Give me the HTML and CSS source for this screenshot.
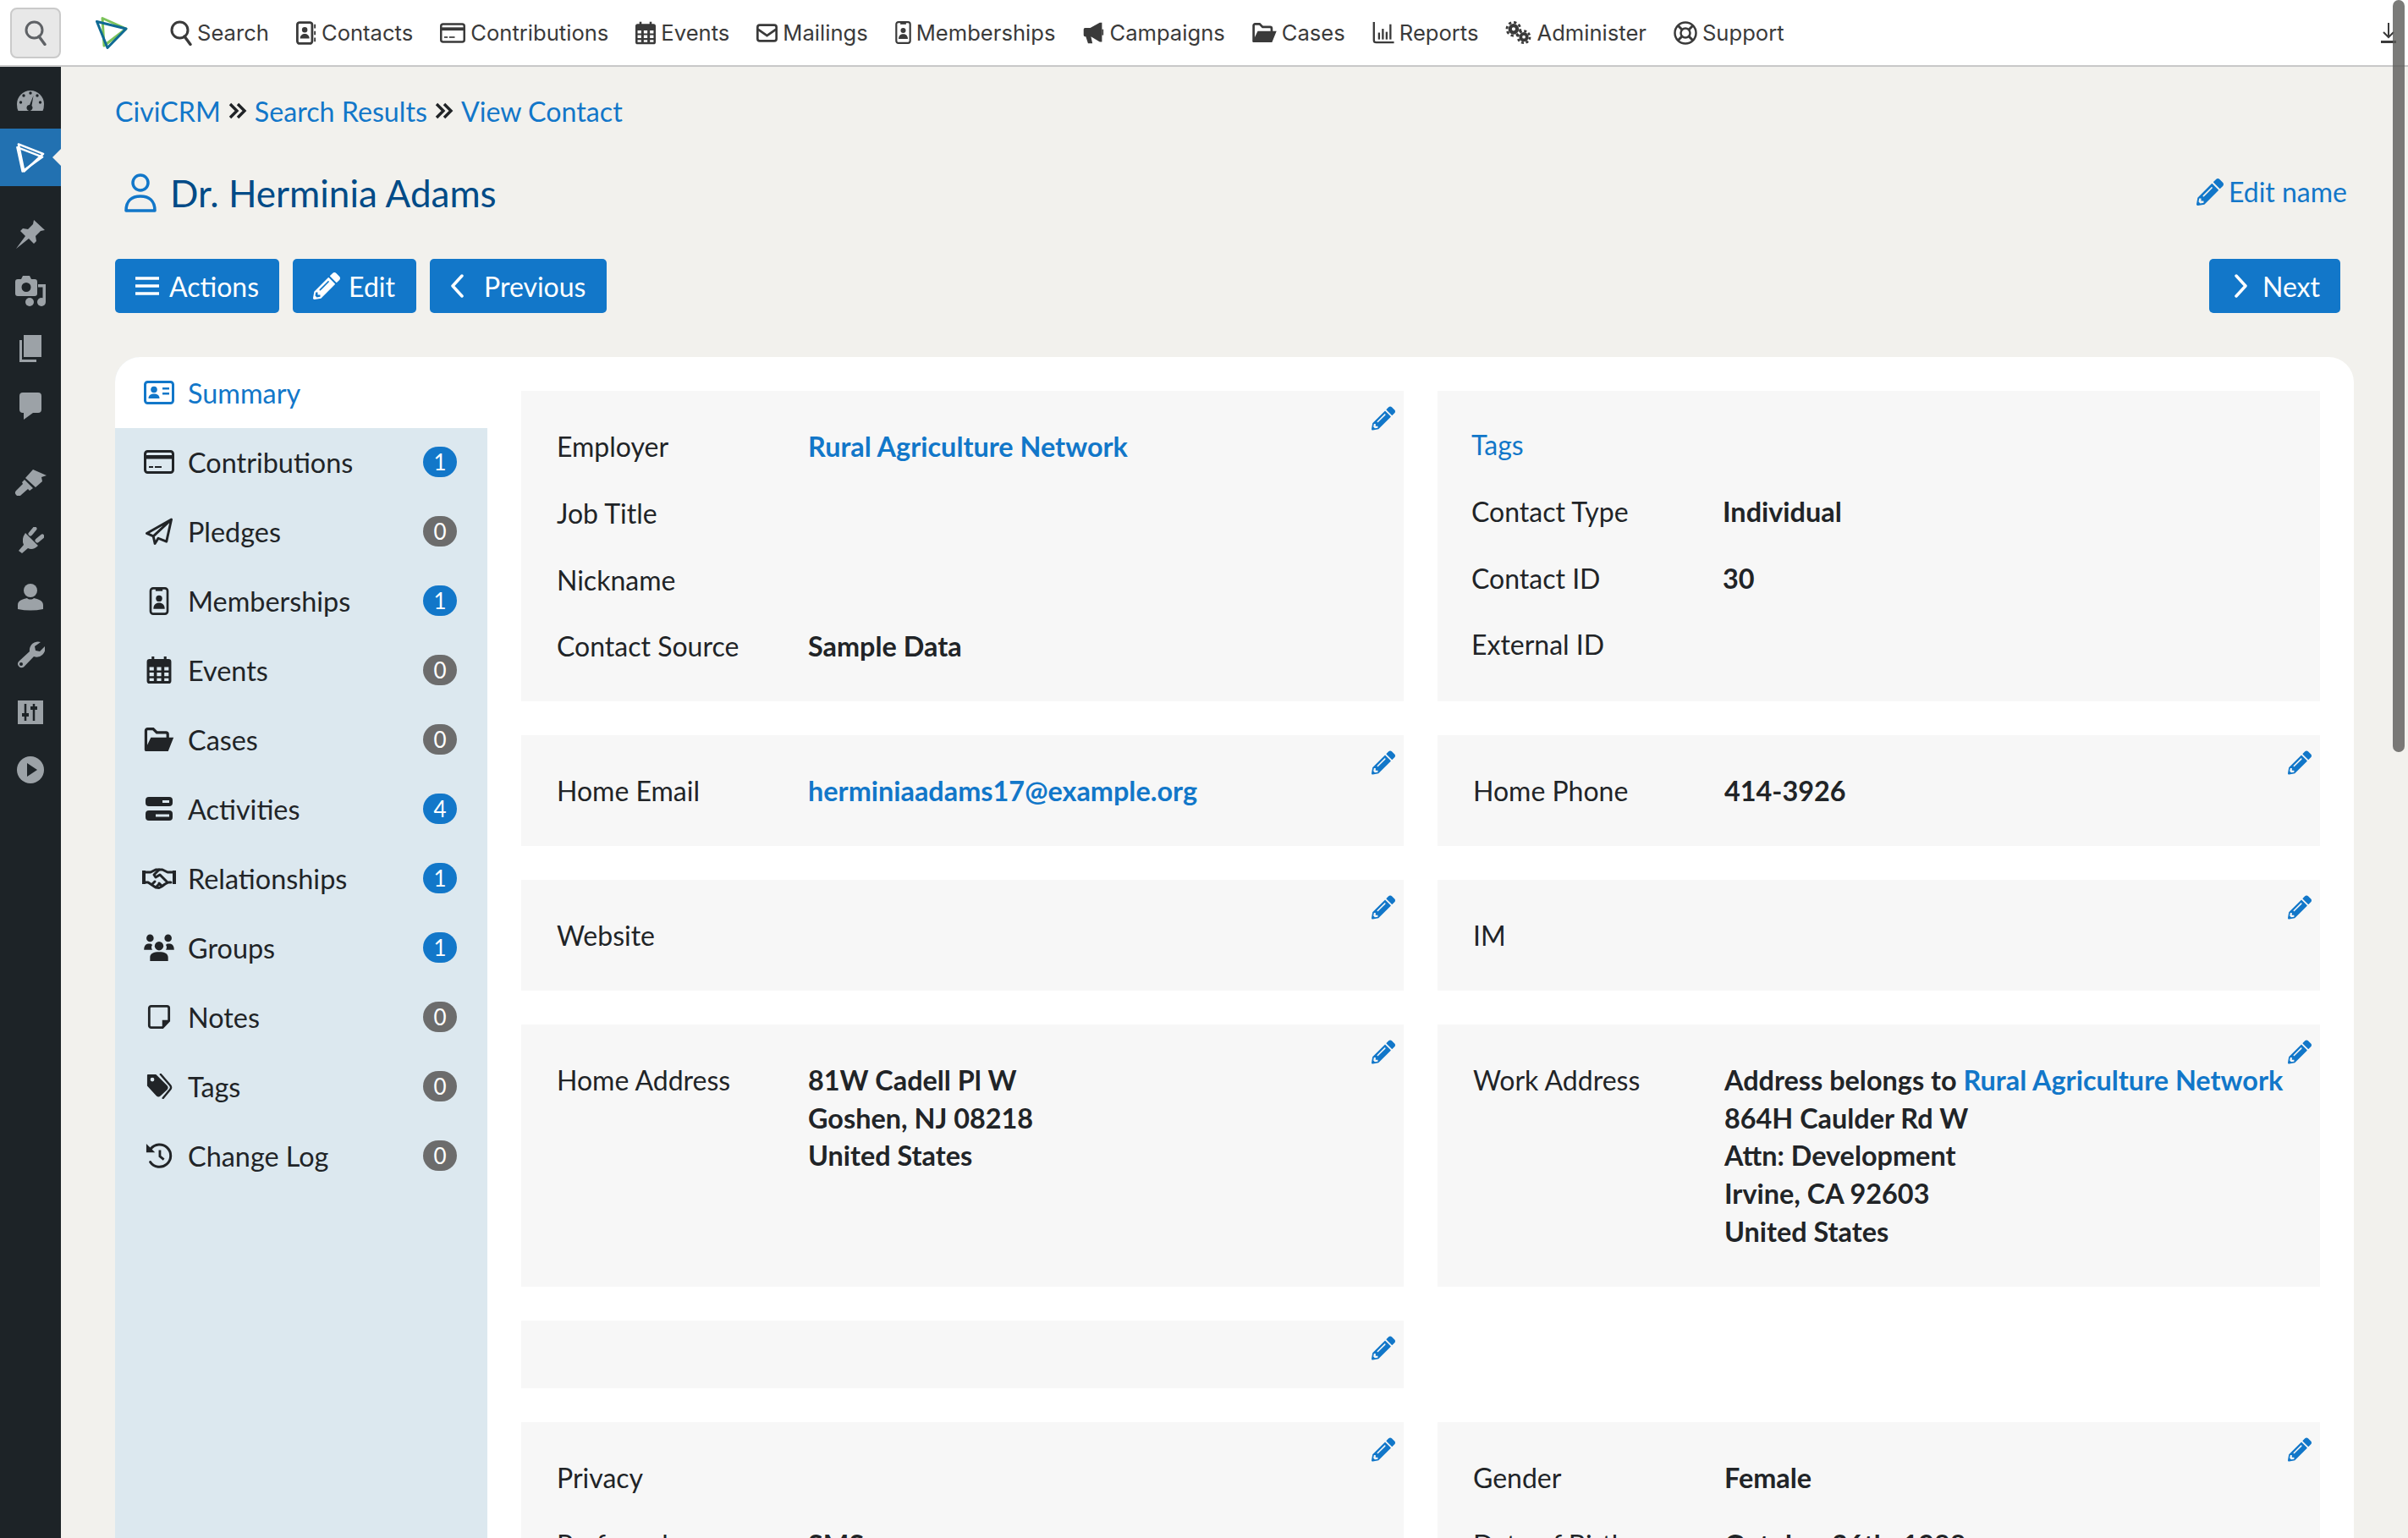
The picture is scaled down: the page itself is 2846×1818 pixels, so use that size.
FILE: index.html
```html
<!DOCTYPE html>
<html lang="en">
<head>
    <meta charset="UTF-8">
    <meta name="viewport" content="width=device-width, initial-scale=1.0">
    <title>Dr. Herminia Adams | CiviCRM</title>
    <link rel="stylesheet" href="styles.css">
</head>
<body>
    <svg class="icon-defs" aria-hidden="true">
        <symbol id="i-pencil" viewBox="0 0 512 512"><path d="M497.9 142.1l-46.1 46.1c-4.7 4.7-12.3 4.7-17 0l-111-111c-4.7-4.7-4.7-12.3 0-17l46.1-46.1c18.7-18.7 49.1-18.7 67.9 0l60.1 60.1c18.8 18.7 18.8 49.1 0 67.9zM284.2 99.8L21.6 362.4.4 483.9c-2.9 16.4 11.4 30.6 27.8 27.8l121.5-21.3 262.6-262.6c4.7-4.7 4.7-12.3 0-17l-111-111c-4.8-4.7-12.4-4.7-17.1 0zM124.1 339.9c-5.5-5.5-5.5-14.3 0-19.8l154-154c5.5-5.5 14.3-5.5 19.8 0s5.5 14.3 0 19.8l-154 154c-5.5 5.5-14.3 5.5-19.8 0zM88 424h48v36.3l-64.5 11.3-31.1-31.1L51.7 376H88v48z"/></symbol>
        <symbol id="i-search" viewBox="0 0 26 30"><circle cx="11.5" cy="11.5" r="9.5" fill="none" stroke="currentColor" stroke-width="3"/><path d="M17 19l7 9.500" fill="none" stroke="currentColor" stroke-width="3.400" stroke-linecap="round"/></symbol>
        <symbol id="i-contacts" viewBox="0 0 26 30"><rect x="1.500" y="1.500" width="19" height="27" rx="3" fill="none" stroke="currentColor" stroke-width="3"/><circle cx="11" cy="11" r="3.500"/><path d="M5 22c0-4 3-6 6-6s6 2 6 6z"/><path d="M24 4v5M24 12.500v5M24 21v5" stroke="currentColor" stroke-width="2"/></symbol>
        <symbol id="i-card" viewBox="0 0 36 28"><rect x="1.500" y="1.500" width="33" height="25" rx="3" fill="none" stroke="currentColor" stroke-width="3"/><rect x="2" y="6" width="32" height="4.500"/><rect x="6" y="19" width="5" height="2"/><rect x="13" y="19" width="8" height="2"/></symbol>
        <symbol id="i-calendar" viewBox="0 0 28 31"><path fill-rule="evenodd" d="M3 3h22a3 3 0 0 1 3 3v22a3 3 0 0 1-3 3H3a3 3 0 0 1-3-3V6a3 3 0 0 1 3-3zM3 12v4h5v-4zM11.500 12v4h5v-4zM20 12v4h5v-4zM3 18.500v4h5v-4zM11.500 18.500v4h5v-4zM20 18.500v4h5v-4zM3 25v3h5v-3zM11.500 25v3h5v-3zM20 25v3h5v-3z"/><rect x="5.500" width="3" height="6"/><rect x="19.500" width="3" height="6"/></symbol>
        <symbol id="i-mail" viewBox="0 0 28 24"><rect x="1.500" y="1.500" width="25" height="21" rx="3" fill="none" stroke="currentColor" stroke-width="3"/><path d="M2 7l12 8.500L26 7" fill="none" stroke="currentColor" stroke-width="3"/></symbol>
        <symbol id="i-member" viewBox="0 0 22 32"><rect x="1.300" y="1.300" width="19.400" height="29.400" rx="3" fill="none" stroke="currentColor" stroke-width="2.600"/><rect x="7" y="1" width="8" height="3.500"/><circle cx="11" cy="13" r="3.600"/><path d="M4.500 25c0-5 3-7 6.500-7s6.500 2 6.500 7z"/></symbol>
        <symbol id="i-bullhorn" viewBox="0 0 28 30"><path d="M1 10a2 2 0 0 1 2-2h7L23 1h3v26h-3L11 20l2 9H7L4 20H3a2 2 0 0 1-2-2z"/><rect x="26" y="10" width="2" height="8"/></symbol>
        <symbol id="i-folder" viewBox="0 0 32 27"><path d="M1.500 25V3.500a2 2 0 0 1 2-2h6l4 4h10a2 2 0 0 1 2 2V12" fill="none" stroke="currentColor" stroke-width="3"/><path d="M7 11h25l-6 15H1a1 1 0 0 1-.5-1.500z"/></symbol>
        <symbol id="i-chart" viewBox="0 0 28 29"><path d="M1.500 0v24a3 3 0 0 0 3 3H28" fill="none" stroke="currentColor" stroke-width="2.600"/><rect x="7" y="14" width="2.600" height="9"/><rect x="12" y="9" width="2.600" height="14"/><rect x="17" y="13" width="2.600" height="10"/><rect x="22" y="3" width="2.600" height="20"/></symbol>
        <symbol id="i-cogs" viewBox="0 0 32 30"><g fill="none" stroke="currentColor"><circle cx="10" cy="10" r="4.500" stroke-width="4.500"/><circle cx="10" cy="10" r="8.500" stroke-width="3" stroke-dasharray="3.500 3.170"/><circle cx="23" cy="20" r="4" stroke-width="4"/><circle cx="23" cy="20" r="7.500" stroke-width="3" stroke-dasharray="3.200 2.690"/></g></symbol>
        <symbol id="i-lifering" viewBox="0 0 28 28"><g fill="none" stroke="currentColor" stroke-width="2.500"><circle cx="14" cy="14" r="12.500"/><circle cx="14" cy="14" r="5.500"/><path d="M5.200 5.200l5 5M22.800 5.200l-5 5M5.200 22.800l5-5M22.800 22.800l-5-5" stroke-width="3"/></g></symbol>
        <symbol id="i-idcard" viewBox="0 0 36 28"><rect x="1.500" y="1.500" width="33" height="25" rx="3" fill="none" stroke="currentColor" stroke-width="3"/><circle cx="12" cy="10.500" r="3.800"/><path d="M5.500 21c0-4 3-5.500 6.500-5.500s6.500 1.500 6.500 5.500z"/><rect x="22" y="8" width="8" height="2.500"/><rect x="22" y="14" width="8" height="2.500"/></symbol>
        <symbol id="i-plane" viewBox="0 0 34 34"><path d="M32 2L2 19l8 3.500L32 2l-6 27-10-4-4 6.500-2-9" fill="none" stroke="currentColor" stroke-width="3" stroke-linejoin="round"/></symbol>
        <symbol id="i-server" viewBox="0 0 32 28"><path fill-rule="evenodd" d="M4 0h24a4 4 0 0 1 4 4v3a4 4 0 0 1-4 4H4a4 4 0 0 1-4-4V4a4 4 0 0 1 4-4zM20 4v3h8V4zM4 16h24a4 4 0 0 1 4 4v4a4 4 0 0 1-4 4H4a4 4 0 0 1-4-4v-4a4 4 0 0 1 4-4zM12 20.500v3h16v-3z"/></symbol>
        <symbol id="i-handshake" viewBox="0 0 40 26"><rect y="4" width="4" height="16"/><rect x="36" y="4" width="4" height="16"/><g fill="none" stroke="currentColor" stroke-width="3" stroke-linejoin="round" stroke-linecap="round"><path d="M4 6h6l6-3h8l6 3h6M4 18h3l9 6 4 .5 3-1.500 4-3 4-2h3"/><path d="M20 3l-6 6 2 3 5-3 8 8"/><path d="M12 20l3-3M17 23l3-3M23 22l-3-3"/></g></symbol>
        <symbol id="i-users" viewBox="0 0 40 36"><circle cx="8" cy="5.500" r="4.800"/><circle cx="32" cy="5.500" r="4.800"/><circle cx="20" cy="16" r="5.800"/><path d="M0 21c0-6 3-8 7-8 2 0 3 .5 4 1.500-1.500 2-1.500 4 0 6.500zM40 21c0-6-3-8-7-8-2 0-3 .5-4 1.500 1.500 2 1.500 4 0 6.500zM8 36v-5c0-5 5-7 12-7s12 2 12 7v5z"/></symbol>
        <symbol id="i-note" viewBox="0 0 28 30"><path d="M4 1.500h20a2.500 2.500 0 0 1 2.500 2.500v16l-8 8.500H4A2.500 2.500 0 0 1 1.500 26V4A2.500 2.500 0 0 1 4 1.500z" fill="none" stroke="currentColor" stroke-width="3"/><path d="M27 19h-9v10z"/></symbol>
        <symbol id="i-tags" viewBox="0 0 32 32"><path fill-rule="evenodd" d="M2 1h10l14 14a4 4 0 0 1 0 5.500L18 28a4 4 0 0 1-5.500 0L1 15.500V2a1 1 0 0 1 1-1zM7.500 5a2.500 2.500 0 1 0 0 5 2.500 2.500 0 0 0 0-5z"/><path d="M18 1l12 14a4 4 0 0 1 0 5L21 31" fill="none" stroke="currentColor" stroke-width="2.600" stroke-linecap="round"/></symbol>
        <symbol id="i-history" viewBox="0 0 32 34"><path d="M5.500 8.500A14 14 0 1 1 5 25" fill="none" stroke="currentColor" stroke-width="3.200" stroke-linecap="round"/><path d="M0 2l11 11H0z"/><path d="M17 10v8l5 4" fill="none" stroke="currentColor" stroke-width="3"/></symbol>
        <symbol id="i-angles" viewBox="0 0 22 20"><path d="M2 2l8 8-8 8M11 2l8 8-8 8" fill="none" stroke="currentColor" stroke-width="3.400"/></symbol>
        <symbol id="i-logo" viewBox="0 0 38 38"><path d="M8 1.500L36 14 10 34z" fill="none" stroke="#7cc35a" stroke-width="3" stroke-linejoin="round"/><path d="M1.500 5.500L36 14 14 36.500z" fill="none" stroke="#0f6a94" stroke-width="3" stroke-linejoin="round"/></symbol>
        <symbol id="i-logo-white" viewBox="0 0 36 38"><path d="M3 2l31 12-24 22z" fill="none" stroke="#fff" stroke-width="2.600" stroke-linejoin="round"/><path d="M1.500 6L33 18 8 36z" fill="none" stroke="#fff" stroke-width="2.600" stroke-linejoin="round"/></symbol>
        <symbol id="i-gauge" viewBox="0 0 32 26"><path d="M0 18a16 16 0 0 1 32 0q0 5-1.500 8h-29Q0 23 0 18z"/><g fill="#1d2327"><circle cx="16" cy="5" r="1.700"/><circle cx="8" cy="8" r="1.700"/><circle cx="24" cy="8" r="1.700"/><circle cx="4.500" cy="16" r="1.700"/><circle cx="27.500" cy="16" r="1.700"/></g><path d="M19.500 8l-2 12a3.500 3.500 0 1 1-6 2 3.500 3.500 0 0 1 3.500-3z" fill="#1d2327"/></symbol>
        <symbol id="i-pin" viewBox="0 0 34 35"><path d="M0 35l11-15-6-6 3-3 6 1 6-6 1-5 13 12-5 1-6 6 1 6-3 3-6-6z"/></symbol>
        <symbol id="i-media" viewBox="0 0 37 36"><path fill-rule="evenodd" d="M3 4h4l2-4h8l2 4h4a3 3 0 0 1 3 3v14a3 3 0 0 1-3 3H3a3 3 0 0 1-3-3V7a3 3 0 0 1 3-3zM13 8a5.500 5.500 0 1 0 0 11 5.500 5.500 0 0 0 0-11z"/><circle cx="17" cy="31" r="5"/><circle cx="31" cy="31" r="5"/><rect x="32.500" y="10" width="3.500" height="21"/><rect x="27" y="10" width="9" height="3.500"/></symbol>
        <symbol id="i-pages" viewBox="0 0 26 32"><path d="M0 6h3v23h17v3H0z"/><rect x="5" width="21" height="26"/></symbol>
        <symbol id="i-comment" viewBox="0 0 26 32"><path d="M4 0h18a4 4 0 0 1 4 4v16a4 4 0 0 1-4 4h-6L5 32v-8H4a4 4 0 0 1-4-4V4a4 4 0 0 1 4-4z"/></symbol>
        <symbol id="i-brush" viewBox="0 0 38 31"><path d="M22 0l16 7-6 2 1 5-8 7-12-11zM12 12l10 10-4 3-2-2-8 7a3 3 0 0 1-6-5l8-8-1-2z"/></symbol>
        <symbol id="i-plug" viewBox="0 0 31 31"><path d="M9 7l15 15q-6 6-12 3l-7 6-4-3 6-7Q4 14 9 7z"/><path d="M15 8l5-6M23 16l6-5" stroke="currentColor" stroke-width="5" stroke-linecap="round"/></symbol>
        <symbol id="i-person" viewBox="0 0 30 32"><circle cx="15" cy="8" r="8"/><path d="M0 30v-5c0-5 6-7 11-8 2 2 6 2 8 0 5 1 11 3 11 8v5q-15 3-30 0z"/></symbol>
        <symbol id="i-wrench" viewBox="0 0 33 32"><path fill-rule="evenodd" d="M28 1a10 10 0 0 0-13 11L2 24a4.500 4.500 0 0 0 6 6.500L20 18a10 10 0 0 0 13-12l-6 6-5-1-1-5zM5 25a2 2 0 1 0 0 4 2 2 0 0 0 0-4z"/></symbol>
        <symbol id="i-sliders" viewBox="0 0 30 28"><rect width="30" height="28"/><path d="M9 4v20M19 4v20" stroke="#1d2327" stroke-width="2.500"/><path d="M5 17h8M15 9h8" stroke="#1d2327" stroke-width="4"/></symbol>
        <symbol id="i-play" viewBox="0 0 32 32"><circle cx="16" cy="16" r="16"/><path d="M12 8l12 8-12 8z" fill="#1d2327"/></symbol>
    </svg>

    <header class="topbar">
        <button class="menu-search" type="button"><svg width="26" height="30"><use href="#i-search"/></svg></button>
        <svg class="top-logo" width="38" height="38"><use href="#i-logo"/></svg>
        <nav class="top-nav">
            <a href="#"><svg width="26" height="30"><use href="#i-search"/></svg>Search</a>
            <a href="#"><svg width="24" height="28"><use href="#i-contacts"/></svg>Contacts</a>
            <a href="#"><svg width="30" height="24"><use href="#i-card"/></svg>Contributions</a>
            <a href="#"><svg width="24" height="28"><use href="#i-calendar"/></svg>Events</a>
            <a href="#"><svg width="25" height="22"><use href="#i-mail"/></svg>Mailings</a>
            <a href="#"><svg width="19" height="27"><use href="#i-member"/></svg>Memberships</a>
            <a href="#"><svg width="26" height="26"><use href="#i-bullhorn"/></svg>Campaigns</a>
            <a href="#"><svg width="29" height="24"><use href="#i-folder"/></svg>Cases</a>
            <a href="#"><svg width="26" height="26"><use href="#i-chart"/></svg>Reports</a>
            <a href="#"><svg width="31" height="28"><use href="#i-cogs"/></svg>Administer</a>
            <a href="#"><svg width="28" height="28"><use href="#i-lifering"/></svg>Support</a>
        </nav>
        <svg class="top-collapse" width="18" height="24" viewBox="0 0 18 24"><path d="M9 0v17M3 11l6 6 6-6" fill="none" stroke="#3a3a3a" stroke-width="2"/><rect y="21" width="18" height="3" fill="#3a3a3a"/></svg>
    </header>

    <div class="layout">
        <aside class="admin-menu">
            <div class="menu-group">
                <a class="menu-item" href="#"><svg width="32" height="26"><use href="#i-gauge"/></svg></a>
                <a class="menu-item active" href="#"><svg width="34" height="37"><use href="#i-logo-white"/></svg></a>
            </div>
            <div class="menu-group">
                <a class="menu-item" href="#"><svg width="34" height="35"><use href="#i-pin"/></svg></a>
                <a class="menu-item" href="#"><svg width="37" height="36"><use href="#i-media"/></svg></a>
                <a class="menu-item" href="#"><svg width="26" height="32"><use href="#i-pages"/></svg></a>
                <a class="menu-item" href="#"><svg width="26" height="32"><use href="#i-comment"/></svg></a>
            </div>
            <div class="menu-group">
                <a class="menu-item" href="#"><svg width="38" height="31"><use href="#i-brush"/></svg></a>
                <a class="menu-item" href="#"><svg width="31" height="31"><use href="#i-plug"/></svg></a>
                <a class="menu-item" href="#"><svg width="30" height="32"><use href="#i-person"/></svg></a>
                <a class="menu-item" href="#"><svg width="33" height="32"><use href="#i-wrench"/></svg></a>
                <a class="menu-item" href="#"><svg width="30" height="28"><use href="#i-sliders"/></svg></a>
                <a class="menu-item" href="#"><svg width="32" height="32"><use href="#i-play"/></svg></a>
            </div>
        </aside>

        <main class="content">
            <div class="breadcrumb">
                <a href="#">CiviCRM</a>
                <svg class="crumb-sep" width="22" height="20"><use href="#i-angles"/></svg>
                <a href="#">Search Results</a>
                <svg class="crumb-sep" width="22" height="20"><use href="#i-angles"/></svg>
                <a href="#">View Contact</a>
            </div>

            <div class="title-row">
                <h1>
                    <svg class="title-icon" width="40" height="46" viewBox="0 0 40 46"><circle cx="20" cy="11" r="9" fill="none" stroke="currentColor" stroke-width="3.500"/><path d="M3 44c0-12 7-17 17-17s17 5 17 17z" fill="none" stroke="currentColor" stroke-width="3.500" stroke-linejoin="round"/></svg>
                    Dr. Herminia Adams
                </h1>
                <a class="edit-name" href="#"><svg width="32" height="32"><use href="#i-pencil"/></svg>Edit name</a>
            </div>

            <div class="actions-row">
                <a class="btn" href="#"><svg width="28" height="24" viewBox="0 0 28 24"><path d="M0 3h28M0 12h28M0 21h28" stroke="currentColor" stroke-width="3.500"/></svg>Actions</a>
                <a class="btn btn-edit" href="#"><svg width="32" height="32"><use href="#i-pencil"/></svg>Edit</a>
                <a class="btn btn-prev" href="#"><svg width="16" height="28" viewBox="0 0 16 28"><path d="M14 2L3 14l11 12" fill="none" stroke="currentColor" stroke-width="3.500" stroke-linecap="round" stroke-linejoin="round"/></svg>Previous</a>
                <a class="btn btn-next" href="#"><svg width="16" height="28" viewBox="0 0 16 28"><path d="M2 2l11 12L2 26" fill="none" stroke="currentColor" stroke-width="3.500" stroke-linecap="round" stroke-linejoin="round"/></svg>Next</a>
            </div>

            <section class="contact-card">
                <ul class="tabs">
                    <li class="tab selected"><svg width="36" height="28"><use href="#i-idcard"/></svg><span class="tab-name">Summary</span></li>
                    <li class="tab"><svg width="36" height="28"><use href="#i-card"/></svg><span class="tab-name">Contributions</span><span class="badge">1</span></li>
                    <li class="tab"><svg width="34" height="33"><use href="#i-plane"/></svg><span class="tab-name">Pledges</span><span class="badge zero">0</span></li>
                    <li class="tab"><svg width="24" height="33"><use href="#i-member"/></svg><span class="tab-name">Memberships</span><span class="badge">1</span></li>
                    <li class="tab"><svg width="28" height="32"><use href="#i-calendar"/></svg><span class="tab-name">Events</span><span class="badge zero">0</span></li>
                    <li class="tab"><svg width="36" height="29"><use href="#i-folder"/></svg><span class="tab-name">Cases</span><span class="badge zero">0</span></li>
                    <li class="tab"><svg width="32" height="28"><use href="#i-server"/></svg><span class="tab-name">Activities</span><span class="badge">4</span></li>
                    <li class="tab"><svg width="40" height="26"><use href="#i-handshake"/></svg><span class="tab-name">Relationships</span><span class="badge">1</span></li>
                    <li class="tab"><svg width="40" height="32"><use href="#i-users"/></svg><span class="tab-name">Groups</span><span class="badge">1</span></li>
                    <li class="tab"><svg width="28" height="28"><use href="#i-note"/></svg><span class="tab-name">Notes</span><span class="badge zero">0</span></li>
                    <li class="tab"><svg width="32" height="30"><use href="#i-tags"/></svg><span class="tab-name">Tags</span><span class="badge zero">0</span></li>
                    <li class="tab"><svg width="32" height="32"><use href="#i-history"/></svg><span class="tab-name">Change Log</span><span class="badge zero">0</span></li>
                </ul>

                <div class="panels">
                    <div class="panel">
                        <a class="panel-edit" href="#"><svg width="28" height="29"><use href="#i-pencil"/></svg></a>
                        <div class="field"><span class="label">Employer</span><span class="value"><a href="#">Rural Agriculture Network</a></span></div>
                        <div class="field"><span class="label">Job Title</span></div>
                        <div class="field"><span class="label">Nickname</span></div>
                        <div class="field"><span class="label">Contact Source</span><span class="value">Sample Data</span></div>
                    </div>
                    <div class="panel panel-tags">
                        <div class="field"><span class="label"><a href="#">Tags</a></span></div>
                        <div class="field"><span class="label">Contact Type</span><span class="value">Individual</span></div>
                        <div class="field"><span class="label">Contact ID</span><span class="value">30</span></div>
                        <div class="field"><span class="label">External ID</span></div>
                    </div>

                    <div class="panel">
                        <a class="panel-edit" href="#"><svg width="28" height="29"><use href="#i-pencil"/></svg></a>
                        <div class="field"><span class="label">Home Email</span><span class="value"><a href="#">herminiaadams17@example.org</a></span></div>
                    </div>
                    <div class="panel">
                        <a class="panel-edit" href="#"><svg width="28" height="29"><use href="#i-pencil"/></svg></a>
                        <div class="field"><span class="label">Home Phone</span><span class="value">414-3926</span></div>
                    </div>

                    <div class="panel">
                        <a class="panel-edit" href="#"><svg width="28" height="29"><use href="#i-pencil"/></svg></a>
                        <div class="field"><span class="label">Website</span></div>
                    </div>
                    <div class="panel">
                        <a class="panel-edit" href="#"><svg width="28" height="29"><use href="#i-pencil"/></svg></a>
                        <div class="field"><span class="label">IM</span></div>
                    </div>

                    <div class="panel">
                        <a class="panel-edit" href="#"><svg width="28" height="29"><use href="#i-pencil"/></svg></a>
                        <div class="field"><span class="label">Home Address</span><span class="value">81W Cadell Pl W<br>Goshen, NJ 08218<br>United States</span></div>
                    </div>
                    <div class="panel">
                        <a class="panel-edit" href="#"><svg width="28" height="29"><use href="#i-pencil"/></svg></a>
                        <div class="field"><span class="label">Work Address</span><span class="value">Address belongs to <a href="#">Rural Agriculture Network</a><br>864H Caulder Rd W<br>Attn: Development<br>Irvine, CA 92603<br>United States</span></div>
                    </div>

                    <div class="panel panel-empty">
                        <a class="panel-edit" href="#"><svg width="28" height="29"><use href="#i-pencil"/></svg></a>
                    </div>
                    <div></div>

                    <div class="panel">
                        <a class="panel-edit" href="#"><svg width="28" height="29"><use href="#i-pencil"/></svg></a>
                        <div class="field"><span class="label">Privacy</span></div>
                        <div class="field"><span class="label">Preferred</span><span class="value">SMS</span></div>
                    </div>
                    <div class="panel">
                        <a class="panel-edit" href="#"><svg width="28" height="29"><use href="#i-pencil"/></svg></a>
                        <div class="field"><span class="label">Gender</span><span class="value">Female</span></div>
                        <div class="field"><span class="label">Date of Birth</span><span class="value">October 26th, 1988</span></div>
                    </div>
                </div>
            </section>
        </main>
    </div>

    <div class="scroll-thumb"></div>
</body>
</html>
```

FILE: styles.css
```css
body {
    margin: 0;
    height: 1818px;
    overflow: hidden;
    font-family: Lato, sans-serif;
    font-size: 32px;
    color: #212427;
    background-color: #f2f1ed;
}

a {
    color: #1277c9;
    text-decoration: none;
}

svg {
    flex-shrink: 0;
    fill: currentColor;
}

.icon-defs {
    display: none;
}

/* top bar */
.topbar {
    display: flex;
    align-items: center;
    height: 77px;
    background-color: #fff;
    border-bottom: 2px solid #c8c8c8;
}

.menu-search {
    display: flex;
    align-items: center;
    justify-content: center;
    width: 60px;
    height: 60px;
    margin-left: 12px;
    padding: 0;
    color: #5f6266;
    background-color: #e8e8e8;
    border: 2px solid #cacaca;
    border-radius: 8px;
}

.top-logo {
    margin-left: 41px;
}

.top-nav {
    display: flex;
    align-items: center;
    gap: 32px;
    margin-left: 50px;
    font-family: Inter, sans-serif;
    font-size: 25.600px;
}

.top-nav a {
    display: flex;
    align-items: center;
    gap: 6px;
    color: #3a3a3a;
}

.top-collapse {
    margin-left: auto;
    margin-right: 14px;
}

/* wp admin menu */
.layout {
    display: flex;
    height: 1739px;
}

.admin-menu {
    flex: 0 0 72px;
    padding-top: 5px;
    color: #9ca2a7;
    background-color: #1d2327;
}

.menu-group {
    margin-bottom: 22px;
}

.menu-item {
    display: flex;
    align-items: center;
    justify-content: center;
    position: relative;
    height: 68px;
    color: #9ca2a7;
}

.menu-item.active {
    background-color: #2271b1;
}

.menu-item.active::after {
    content: "";
    position: absolute;
    right: 0;
    top: 24px;
    border: 10px solid transparent;
    border-right-color: #f2f1ed;
    border-left-width: 0;
}

/* page header */
.content {
    flex: 1;
    padding: 30px 64px 0;
}

.breadcrumb {
    display: flex;
    align-items: center;
    gap: 9px;
    height: 44px;
    font-size: 32.200px;
}

.crumb-sep {
    color: #212427;
}

.title-row {
    display: flex;
    align-items: center;
    justify-content: space-between;
    height: 54px;
    margin-top: 48px;
    padding-right: 8px;
}

h1 {
    display: flex;
    align-items: center;
    gap: 15px;
    margin: 0 0 0 10px;
    font-size: 44px;
    font-weight: normal;
    color: #004b87;
}

.title-icon {
    color: #1277c9;
}

.edit-name {
    display: flex;
    align-items: center;
    gap: 6px;
    margin-bottom: 3px;
}

.actions-row {
    display: flex;
    gap: 16px;
    margin-top: 51px;
    padding-right: 16px;
}

.btn {
    display: flex;
    align-items: center;
    gap: 12px;
    height: 64px;
    padding: 0 24px;
    color: #fff;
    background-color: #1277c9;
    border-radius: 5px;
}

.btn-edit {
    gap: 10px;
    padding-right: 25px;
}

.btn-prev {
    gap: 24px;
    padding-right: 25px;
}

.btn-next {
    gap: 17px;
    margin-left: auto;
    padding-left: 30px;
}

/* contact card */
.contact-card {
    display: flex;
    margin-top: 52px;
    padding-right: 40px;
    background-color: #fff;
    border-radius: 30px 30px 0 0;
}

.tabs {
    flex: 0 0 440px;
    margin: 0;
    padding: 0 0 400px;
    list-style: none;
    font-size: 32.400px;
    background-color: #dce8ef;
    border-top-left-radius: 30px;
}

.tab {
    display: flex;
    align-items: center;
    height: 82px;
    padding-left: 34px;
    padding-right: 36px;
}

.tab svg {
    width: 40px;
    margin-right: 14px;
    margin-left: -2px;
}

.tab.selected {
    height: 84px;
    margin-bottom: -1px;
    color: #1277c9;
    background-color: #fff;
    border-top-left-radius: 30px;
}

.tab-name {
    flex: 1;
}

.badge {
    width: 40px;
    height: 36px;
    line-height: 36px;
    font-size: 26px;
    text-align: center;
    color: #fff;
    background-color: #1277c9;
    border-radius: 18px;
}

.badge.zero {
    background-color: #6c6c6c;
}

.panels {
    flex: 1;
    display: grid;
    grid-template-columns: 1fr 1fr;
    gap: 40px;
    padding: 40px 0 0 40px;
    align-content: start;
}

.panel {
    position: relative;
    padding: 27px 10px 25px 42px;
    background-color: #f7f7f7;
}

.panel-tags {
    padding-top: 25px;
    padding-left: 40px;
}

.panel-empty {
    height: 80px;
    padding: 0;
}

.panel-edit {
    display: flex;
    position: absolute;
    top: 18px;
    right: 10px;
}

.field {
    display: flex;
    min-height: 78.750px;
    box-sizing: border-box;
    padding: 17px 0;
    line-height: 44.800px;
}

.label {
    flex: 0 0 297px;
}

.value {
    font-size: 32.400px;
    font-weight: bold;
}

.scroll-thumb {
    position: absolute;
    top: 0;
    right: 4px;
    width: 14px;
    height: 889px;
    background-color: rgba(90, 90, 88, 0.8);
    border-radius: 7px;
}
```
